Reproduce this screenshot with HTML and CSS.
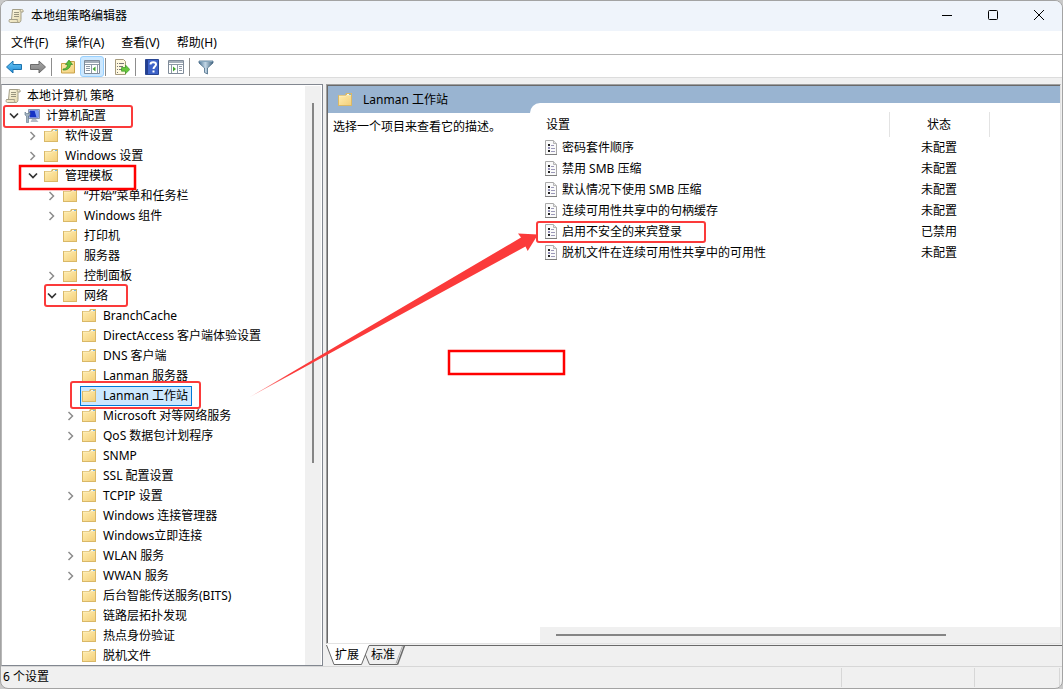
FILE: index.html
```html
<!DOCTYPE html>
<html lang="zh-CN">
<head>
<meta charset="utf-8">
<title>本地组策略编辑器</title>
<link rel="stylesheet" href="styles.css">
</head>
<body>
<svg class="defs" aria-hidden="true">
  <defs>
    <linearGradient id="gold" x1="0" y1="0" x2="1" y2="1"><stop offset="0" stop-color="#ffedb0"/><stop offset="1" stop-color="#f3d07c"/></linearGradient>
    <linearGradient id="paper" x1="0" y1="0" x2="1" y2="1"><stop offset="0" stop-color="#fffbe8"/><stop offset="1" stop-color="#e2d6a8"/></linearGradient>
    <linearGradient id="blue" x1="0" y1="0" x2="0" y2="1"><stop offset="0" stop-color="#6cc8f5"/><stop offset="1" stop-color="#1e8ad6"/></linearGradient>
    <linearGradient id="gray" x1="0" y1="0" x2="0" y2="1"><stop offset="0" stop-color="#a8a8a8"/><stop offset="1" stop-color="#808080"/></linearGradient>
    <linearGradient id="steel" x1="0" y1="0" x2="1" y2="0"><stop offset="0" stop-color="#4f7697"/><stop offset=".45" stop-color="#c3d7e6"/><stop offset="1" stop-color="#42647f"/></linearGradient>
    <linearGradient id="tail" gradientUnits="userSpaceOnUse" x1="249" y1="398" x2="290" y2="374"><stop offset="0" stop-color="#fb3a3a" stop-opacity=".4"/><stop offset="1" stop-color="#fb3a3a"/></linearGradient>
  </defs>
  <symbol id="folder" viewBox="0 0 16 16">
    <path d="M1 3h7l1-2h6v13H1z" fill="#d9b867"/>
    <path d="M10 2h4v1h-4z" fill="#f6fbff"/><path d="M12 2h2v1h-2z" fill="#3c9be0"/>
    <path d="M2 4h7l1-1h4v10H2z" fill="url(#gold)"/>
    <path d="M2 4h7l1-1h4" fill="none" stroke="#fff6d4" stroke-width=".6"/>
  </symbol>
  <symbol id="scroll" viewBox="0 0 16 16">
    <path d="M4.500 1.500h9c1.500 0 2 1 1.500 2.500h-2v7.500c0 2-.8 3-2 3H2.500C1 14.500.7 12.500 1.500 11.500h2z" fill="url(#paper)" stroke="#a39e88"/>
    <path d="M1.500 11.500h8c-.5 1.500 0 3 1.500 3M13 1.500c-1 .5-1 1.500-.5 2.500" fill="#efe7c6" stroke="#a39e88"/>
    <path d="M6 4.500h5M6 6.500h5M6 8.500h5" stroke="#99957f"/>
  </symbol>
  <symbol id="computer" viewBox="0 0 16 16">
    <path d="M4.500 1.500h11v9h-11z" fill="#dfe5ee" stroke="#8c98ac"/><path d="M5.500 2.500h9v7h-9z" fill="#1733c5"/><path d="M10.500 2.500h4v7h-2z" fill="#7f9df0"/>
    <path d="M8 11h4l2.500 3h-8z" fill="#b4bcc6"/>
    <path d="M1 4v3l1.500 1v6.500h2V8L6 7V4L4.500 5.500h-2z" fill="#a3b3c2" stroke="#5d7284" stroke-width=".6"/>
  </symbol>
  <symbol id="right" viewBox="0 0 8 10"><path d="M1.500 1l4 4-4 4" fill="none" stroke="#8c8c8c" stroke-width="1.500"/></symbol>
  <symbol id="down" viewBox="0 0 10 8"><path d="M1 1.500l4 4 4-4" fill="none" stroke="#333" stroke-width="1.700"/></symbol>
  <symbol id="setting" viewBox="0 0 14 16">
    <path d="M1.500.5h8l3 3v11h-11z" fill="#fafafa" stroke="#a9a9a9"/><path d="M1 14.500h12" stroke="#7d7d7d"/><path d="M9.500.5v3h3" fill="#e5e5e5" stroke="#b5b5b5"/>
    <path d="M4 4h2v2H4zM4 10h2v2H4z" fill="#222"/><path d="M4 7h2v2H4z" fill="#8f8cb4"/><path d="M7 5.500h3M7 8.500h4M7 11.500h4" stroke="#9c99b8"/>
  </symbol>
</svg>

<div class="window">
  <header class="titlebar">
    <svg class="icon"><use href="#scroll"/></svg>
    <h1 class="title">本地组策略编辑器</h1>
    <button class="caption" aria-label="最小化"><svg viewBox="0 0 12 12"><path d="M1 5.500h10"/></svg></button>
    <button class="caption" aria-label="最大化"><svg viewBox="0 0 12 12"><rect x="1.500" y=".5" width="9" height="9" rx="1"/></svg></button>
    <button class="caption" aria-label="关闭"><svg viewBox="0 0 12 12"><path d="M1 0l10 10M11 0L1 10"/></svg></button>
  </header>
  <nav class="menubar">
    <button>文件(F)</button><button>操作(A)</button><button>查看(V)</button><button>帮助(H)</button>
  </nav>
  <div class="toolbar">
    <button aria-label="后退"><svg viewBox="0 0 16 16"><path d="M.5 8L7 2v3.500h8.500v5H7V14z" fill="url(#blue)" stroke="#1b72ae"/></svg></button>
    <button aria-label="前进"><svg viewBox="0 0 16 16"><path d="M15.500 8L9 2v3.500H.5v5H9V14z" fill="url(#gray)" stroke="#6c6c6c"/></svg></button>
    <i class="sep"></i>
    <button aria-label="上移一级"><svg viewBox="0 0 16 16"><path d="M1.500 4.500h6l1-2h6v11.500h-13z" fill="url(#gold)" stroke="#c9a24a"/><path d="M3 10c3 0 4.500-2 4.500-4.500H5.500L9 1l3.500 4.500h-2C10.500 9 7 11.500 3 11z" fill="#59bf38" stroke="#37892a" stroke-width=".7"/></svg></button>
    <button class="on" aria-label="显示/隐藏控制台树" aria-pressed="true"><svg viewBox="0 0 16 16"><path d="M.5 1.500h15v13H.5z" fill="#fff" stroke="#7f8b99"/><path d="M1 2h14v2H1z" fill="#a6b0bb"/><path d="M1 5.500h14" stroke="#8e99a6"/><path d="M7.500 6v8M2 7.500h4M2 9.500h4M2 11.500h4M13.500 6v8" stroke="#8e99a6"/><path d="M11.500 7.500v5L8.500 10z" fill="#42a52e"/></svg></button>
    <i class="sep"></i>
    <button aria-label="导出列表"><svg viewBox="0 0 16 16"><path d="M1.500.5h8l2 2v13h-10z" fill="#fff8df" stroke="#a69b7d"/><path d="M3 4.500h1M5 4.500h5M3 7.500h1M5 7.500h4M3 10.500h1M5 10.500h3M3 13.500h1" stroke="#777"/><path d="M7.500 8.500h4V6l4.300 4.500-4.300 4.300v-2.600h-4z" fill="#68c83e" stroke="#3c9825" stroke-width=".7"/></svg></button>
    <i class="sep"></i>
    <button aria-label="帮助"><svg viewBox="0 0 16 16"><path d="M1.500.5h13v15h-13z" fill="#3d62c8" stroke="#284592"/><path d="M2 1h2v14H2z" fill="#243f91"/><path d="M6.500 5.500C6.500 2.500 12 2.500 12 5.500 12 7.500 9.500 7.500 9.500 10" fill="none" stroke="#fff" stroke-width="2"/><path d="M8.500 11.500h2v2h-2z" fill="#fff"/></svg></button>
    <button aria-label="显示/隐藏操作窗格"><svg viewBox="0 0 16 16"><path d="M.5 1.500h15v13H.5z" fill="#fff" stroke="#7f8b99"/><path d="M1 2h14v2H1z" fill="#a6b0bb"/><path d="M1 5.500h14M3.500 6v8M9.500 6v8M11 7.500h3M11 9.500h3M11 11.500h3" stroke="#8e99a6"/><path d="M5 7.500v5L8 10z" fill="#42a52e"/></svg></button>
    <i class="sep"></i>
    <button aria-label="筛选"><svg viewBox="0 0 16 16"><path d="M1 2h14v2L9.500 9v6l-3-1.500V9L1 4z" fill="url(#steel)" stroke="#496b86" stroke-width=".8"/><path d="M1.500 2.500h13" stroke="#86a6bd"/></svg></button>
  </div>

  <main class="panes">
    <section class="tree-pane">
      <ul class="tree">
        <li class="root"><button class="node"><svg class="icon"><use href="#scroll"/></svg>本地计算机 策略</button></li>
        <li class="l1"><button class="twist" aria-label="折叠"><svg class="down"><use href="#down"/></svg></button><button class="node"><svg class="icon"><use href="#computer"/></svg>计算机配置</button></li>
        <li class="l2"><button class="twist" aria-label="展开"><svg class="right"><use href="#right"/></svg></button><button class="node"><svg class="icon"><use href="#folder"/></svg>软件设置</button></li>
        <li class="l2"><button class="twist" aria-label="展开"><svg class="right"><use href="#right"/></svg></button><button class="node"><svg class="icon"><use href="#folder"/></svg>Windows 设置</button></li>
        <li class="l2"><button class="twist" aria-label="折叠"><svg class="down"><use href="#down"/></svg></button><button class="node"><svg class="icon"><use href="#folder"/></svg>管理模板</button></li>
        <li class="l3"><button class="twist" aria-label="展开"><svg class="right"><use href="#right"/></svg></button><button class="node"><svg class="icon"><use href="#folder"/></svg>“开始”菜单和任务栏</button></li>
        <li class="l3"><button class="twist" aria-label="展开"><svg class="right"><use href="#right"/></svg></button><button class="node"><svg class="icon"><use href="#folder"/></svg>Windows 组件</button></li>
        <li class="l3 leaf"><button class="node"><svg class="icon"><use href="#folder"/></svg>打印机</button></li>
        <li class="l3 leaf"><button class="node"><svg class="icon"><use href="#folder"/></svg>服务器</button></li>
        <li class="l3"><button class="twist" aria-label="展开"><svg class="right"><use href="#right"/></svg></button><button class="node"><svg class="icon"><use href="#folder"/></svg>控制面板</button></li>
        <li class="l3"><button class="twist" aria-label="折叠"><svg class="down"><use href="#down"/></svg></button><button class="node"><svg class="icon"><use href="#folder"/></svg>网络</button></li>
        <li class="l4 leaf"><button class="node"><svg class="icon"><use href="#folder"/></svg>BranchCache</button></li>
        <li class="l4 leaf"><button class="node"><svg class="icon"><use href="#folder"/></svg>DirectAccess 客户端体验设置</button></li>
        <li class="l4 leaf"><button class="node"><svg class="icon"><use href="#folder"/></svg>DNS 客户端</button></li>
        <li class="l4 leaf"><button class="node"><svg class="icon"><use href="#folder"/></svg>Lanman 服务器</button></li>
        <li class="l4 leaf"><button class="node selected"><svg class="icon"><use href="#folder"/></svg>Lanman 工作站</button></li>
        <li class="l4"><button class="twist" aria-label="展开"><svg class="right"><use href="#right"/></svg></button><button class="node"><svg class="icon"><use href="#folder"/></svg>Microsoft 对等网络服务</button></li>
        <li class="l4"><button class="twist" aria-label="展开"><svg class="right"><use href="#right"/></svg></button><button class="node"><svg class="icon"><use href="#folder"/></svg>QoS 数据包计划程序</button></li>
        <li class="l4 leaf"><button class="node"><svg class="icon"><use href="#folder"/></svg>SNMP</button></li>
        <li class="l4 leaf"><button class="node"><svg class="icon"><use href="#folder"/></svg>SSL 配置设置</button></li>
        <li class="l4"><button class="twist" aria-label="展开"><svg class="right"><use href="#right"/></svg></button><button class="node"><svg class="icon"><use href="#folder"/></svg>TCPIP 设置</button></li>
        <li class="l4 leaf"><button class="node"><svg class="icon"><use href="#folder"/></svg>Windows 连接管理器</button></li>
        <li class="l4 leaf"><button class="node"><svg class="icon"><use href="#folder"/></svg>Windows立即连接</button></li>
        <li class="l4"><button class="twist" aria-label="展开"><svg class="right"><use href="#right"/></svg></button><button class="node"><svg class="icon"><use href="#folder"/></svg>WLAN 服务</button></li>
        <li class="l4"><button class="twist" aria-label="展开"><svg class="right"><use href="#right"/></svg></button><button class="node"><svg class="icon"><use href="#folder"/></svg>WWAN 服务</button></li>
        <li class="l4 leaf"><button class="node"><svg class="icon"><use href="#folder"/></svg>后台智能传送服务(BITS)</button></li>
        <li class="l4 leaf"><button class="node"><svg class="icon"><use href="#folder"/></svg>链路层拓扑发现</button></li>
        <li class="l4 leaf"><button class="node"><svg class="icon"><use href="#folder"/></svg>热点身份验证</button></li>
        <li class="l4 leaf"><button class="node"><svg class="icon"><use href="#folder"/></svg>脱机文件</button></li>
      </ul>
      <div class="vscroll"><div class="vthumb"></div></div>
    </section>

    <section class="result">
      <div class="result-view">
        <aside class="description">
          <h2 class="banner"><svg class="icon"><use href="#folder"/></svg>Lanman 工作站</h2>
          <p>选择一个项目来查看它的描述。</p>
        </aside>
        <div class="list">
          <div class="sheet">
            <table>
              <thead><tr><th class="name">设置</th><th class="state">状态</th><th></th></tr></thead>
              <tbody>
                <tr><td><span class="cell"><svg class="doc"><use href="#setting"/></svg>密码套件顺序</span></td><td class="state">未配置</td><td></td></tr>
                <tr><td><span class="cell"><svg class="doc"><use href="#setting"/></svg>禁用 SMB 压缩</span></td><td class="state">未配置</td><td></td></tr>
                <tr><td><span class="cell"><svg class="doc"><use href="#setting"/></svg>默认情况下使用 SMB 压缩</span></td><td class="state">未配置</td><td></td></tr>
                <tr><td><span class="cell"><svg class="doc"><use href="#setting"/></svg>连续可用性共享中的句柄缓存</span></td><td class="state">未配置</td><td></td></tr>
                <tr><td><span class="cell"><svg class="doc"><use href="#setting"/></svg>启用不安全的来宾登录</span></td><td class="state">已禁用</td><td></td></tr>
                <tr><td><span class="cell"><svg class="doc"><use href="#setting"/></svg>脱机文件在连续可用性共享中的可用性</span></td><td class="state">未配置</td><td></td></tr>
              </tbody>
            </table>
            <div class="hscroll"><div class="hthumb"></div></div>
          </div>
        </div>
      </div>
      <nav class="tabs">
        <svg class="tab-shape" viewBox="0 0 80 22" aria-hidden="true">
          <path d="M0 0h44L35.500 20.500H8z" fill="#fff"/>
          <path d="M.5 1L8 20.500h27.500L43 1.500H80M39.500 11l4 9.500h28" fill="none" stroke="#696969"/>
          <path d="M71.500 20.500L78.500 1.500" fill="none" stroke="#696969" stroke-width="1.500"/><path d="M70 19.500L76.500 2" stroke="#a9a9a9"/>
        </svg>
        <button>扩展</button><button>标准</button>
      </nav>
    </section>
  </main>

  <footer class="status"><span class="count">6 个设置</span><span class="part wide"></span><span class="part"></span></footer>
</div>

<svg class="marks" viewBox="0 0 1063 689" aria-hidden="true">
  <g fill="none" stroke="#fb3a3a" stroke-width="2">
    <rect x="4" y="106" width="128" height="21" rx="2"/><rect x="45" y="285" width="82" height="21" rx="2"/>
    <rect x="71" y="382" width="129" height="26" rx="2"/><rect x="537" y="222" width="168" height="20" rx="2"/>
  </g>
  <g fill="none" stroke="#f00" stroke-width="2.500"><rect x="20" y="166" width="115" height="23"/><rect x="449" y="351" width="115" height="23"/></g>
  <path d="M249 397.500L521 237.500 518 233.500 538 234.500 527.700 251 525.500 246.500z" fill="url(#tail)"/>
</svg>
</body>
</html>
```
FILE: styles.css
```css
* { box-sizing: border-box; }
body {
  margin: 0;
  min-height: 100vh;
  display: flex;
  background: #c9c9c9;
  color: #000;
  font: 12px/20px "Noto Sans", "Noto Sans CJK SC", sans-serif;
}
button {
  margin: 0;
  padding: 0;
  border: 0;
  background: none;
  color: inherit;
  font: inherit;
  white-space: nowrap;
}
h1, h2, p, ul { margin: 0; padding: 0; font: inherit; }
svg { display: block; flex: none; }
.defs { position: absolute; width: 0; height: 0; }
.icon { width: 16px; height: 16px; }

.window {
  flex: 1;
  min-width: 0;
  display: flex;
  flex-direction: column;
  border: 1px solid #a3a3a3;
  border-radius: 8px;
  background: #f0f0f0;
  overflow: hidden;
}
.titlebar { display: flex; align-items: center; height: 30px; padding-left: 7px; background: #eff4fb; }
.title { flex: 1; padding-left: 7px; }
.caption { width: 46px; height: 30px; display: flex; align-items: center; justify-content: center; }
.caption svg { width: 12px; height: 12px; fill: none; stroke: #000; }

.menubar { display: flex; align-items: center; gap: 17px; height: 24px; padding: 1px 0 0 10px; background: #fff; border-bottom: 1px solid #b4b4b4; }
.toolbar { display: flex; align-items: center; height: 23px; padding: 1px 0 0 1px; background: #fff; border-bottom: 1px solid #dcdcdc; }
.toolbar button { width: 24px; height: 21px; display: flex; align-items: center; justify-content: center; }
.toolbar button svg { width: 16px; height: 16px; }
.toolbar .on { border: 1px solid #99d1ff; border-radius: 3px; background: #cce8ff; }
.sep { width: 1px; height: 18px; margin: 0 4px 0 1px; background: #8d8d8d; }

.panes { flex: 1; display: flex; gap: 3px; padding-top: 6px; }
.tree-pane { flex: none; width: 322px; display: flex; padding: 1px 1px 0; border: 1px solid #828790; border-left-color: #b8b8b8; background: #fff; }
.tree { flex: 1; margin-bottom: -1px; list-style: none; }
.tree li { display: flex; align-items: center; height: 20px; }
.root { padding-left: 1px; }
.l1 { padding-left: 1px; }
.l2 { padding-left: 20px; }
.l3 { padding-left: 39px; }
.l4 { padding-left: 58px; }
.l3.leaf { padding-left: 58px; }
.l4.leaf { padding-left: 77px; }
.twist { width: 19px; height: 20px; display: flex; align-items: center; justify-content: center; }
.right { width: 8px; height: 10px; }
.down { width: 10px; height: 8px; }
.node { display: flex; align-items: center; gap: 6px; height: 20px; padding: 0 3px 0 0; border: 1px solid transparent; }
.selected { border-color: #0078d7; background: #cce8ff; }
.vscroll { width: 16px; padding: 17px 7px 16px; background: #f0f0f0; }
.vthumb { height: 66%; background: #858585; }

.result { flex: 1; min-width: 0; display: flex; flex-direction: column; }
.result-view { flex: 1; display: flex; margin-right: 1px; border: 1px solid #e3e3e3; border-top-color: #a0a0a0; border-left-color: #a0a0a0; background: #fff; box-shadow: inset 1px 1px #696969; padding: 1px 0 0 1px; }
.description { width: 202px; flex: none; }
.banner { display: flex; align-items: center; gap: 10px; height: 27px; padding-left: 9px; background: #99b4d1; }
.description p { padding: 4px 0 0 5px; }
.list { flex: 1; min-width: 0; display: flex; padding-top: 17px; background: linear-gradient(#99b4d1 27px, #fff 27px); }
.sheet { flex: 1; min-width: 0; display: flex; flex-direction: column; justify-content: space-between; padding: 9px 0 0 10px; border-top-left-radius: 10px; background: #fff; }
table { width: 100%; border-collapse: collapse; table-layout: fixed; }
th, td { height: 21px; padding: 0; font-weight: normal; text-align: left; line-height: 20px; white-space: nowrap; }
th { height: 25px; border-right: 1px solid #e3e3e3; }
th:last-child { border: 0; }
.name { width: 349px; padding-left: 6px; }
.state { width: 100px; text-align: center; }
.cell { display: flex; align-items: center; gap: 4px; padding-left: 4px; }
.doc { width: 14px; height: 16px; }
.hscroll { height: 16px; padding: 7px 16px; background: #f0f0f0; }
.hthumb { width: 80%; height: 2px; background: #858585; }

.tabs { position: relative; display: flex; gap: 12px; height: 22px; padding: 2px 0 0 9px; }
.tabs::before { content: ""; position: absolute; left: 43px; right: 0; top: 1px; height: 1px; background: #696969; }
.tab-shape { position: absolute; left: 0; top: 0; width: 80px; height: 22px; }
.tabs button { position: relative; height: 18px; line-height: 18px; }

.status { display: flex; height: 22px; padding-right: 2px; border-top: 1px solid #d7d7d7; }
.count { flex: 1; padding-left: 2px; }
.part { width: 86px; margin: 1px 0; border-left: 1px solid #d7d7d7; border-right: 1px solid #d7d7d7; }
.wide { width: 133px; border-right: 0; }

.marks { position: absolute; left: 0; top: 0; width: 1063px; height: 689px; pointer-events: none; }
```
